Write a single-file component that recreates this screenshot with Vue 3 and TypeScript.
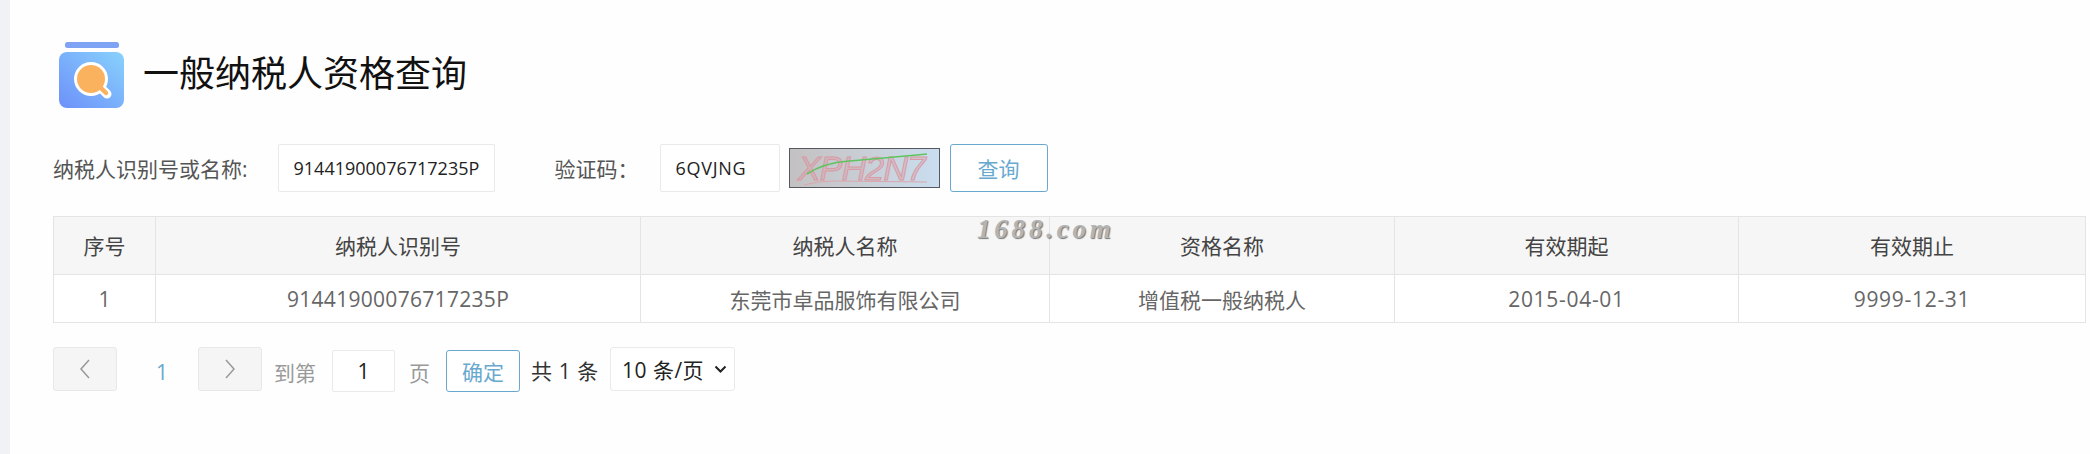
<template>
  <div class="page">
    <div class="strip"></div>
    <main class="main">
      <header class="title-row">
        <svg class="logo" width="66" height="66" viewBox="0 0 66 66">
          <defs>
            <linearGradient id="jar" x1="0" y1="1" x2="1" y2="0">
              <stop offset="0" stop-color="#6d90fa" />
              <stop offset="1" stop-color="#88d2fc" />
            </linearGradient>
          </defs>
          <rect x="6" y="0" width="54" height="6" rx="2.5" fill="#7ea3f5" />
          <rect x="0" y="10" width="65" height="56" rx="8" fill="url(#jar)" />
          <path d="M43 47 L48 52" stroke="#fff" stroke-width="9" stroke-linecap="round" />
          <circle cx="32" cy="37" r="17" fill="#fff" />
          <path d="M42 46 L47 51" stroke="#fbb25f" stroke-width="4.5" stroke-linecap="round" />
          <circle cx="32" cy="37" r="14" fill="#fbb25f" />
        </svg>
        <h1 class="title">一般纳税人资格查询</h1>
      </header>

      <form class="query" @submit.prevent>
        <label class="label">纳税人识别号或名称:</label>
        <input class="field field-id" value="91441900076717235P" />
        <label class="label label-code">验证码：</label>
        <input class="field field-code" value="6QVJNG" />
        <svg class="captcha" width="151" height="40" viewBox="0 0 151 40">
          <defs>
            <linearGradient id="cap" x1="0" y1="0" x2="1" y2="0">
              <stop offset="0" stop-color="#c3c0c1" />
              <stop offset="0.5" stop-color="#c9cfd6" />
              <stop offset="1" stop-color="#c9def0" />
            </linearGradient>
          </defs>
          <rect x="0.5" y="0.5" width="150" height="39" fill="url(#cap)" stroke="#55595f" />
          <text class="captcha-text" x="9" y="32" textLength="128">XPH2N7</text>
          <path d="M15 37 Q28 33 45 33 L138 34" fill="none" stroke="#dba7ad" stroke-width="1" />
          <path d="M18 26 Q34 15 60 13 T138 6" fill="none" stroke="#5fc45f" stroke-width="1.6" />
        </svg>
        <button class="btn btn-query" type="button">查询</button>
      </form>

      <div class="table-wrap">
        <table class="table">
          <colgroup>
            <col v-for="w in colWidths" :key="w.id" :style="{ width: w.px + 'px' }" />
          </colgroup>
          <thead>
            <tr>
              <th v-for="h in headers" :key="h"><span class="th-text">{{ h }}</span></th>
            </tr>
          </thead>
          <tbody>
            <tr>
              <td v-for="c in cells" :key="c.text" :class="c.cls">{{ c.text }}</td>
            </tr>
          </tbody>
        </table>
        <span class="watermark">1688.com</span>
      </div>

      <nav class="pager">
        <button class="page-btn" type="button" aria-label="prev">
          <svg width="12" height="20" viewBox="0 0 12 20"><path d="M10 1 L2 10 L10 19" /></svg>
        </button>
        <span class="page-num">1</span>
        <button class="page-btn" type="button" aria-label="next">
          <svg width="12" height="20" viewBox="0 0 12 20"><path d="M2 1 L10 10 L2 19" /></svg>
        </button>
        <span class="muted goto">到第</span>
        <input class="field page-input" value="1" />
        <span class="muted unit">页</span>
        <button class="btn btn-ok" type="button">确定</button>
        <span class="total">共 1 条</span>
        <div class="size">
          <span>10 条/页</span>
          <svg width="13" height="8" viewBox="0 0 13 8"><path d="M1.5 1.5 L6.5 6.5 L11.5 1.5" /></svg>
        </div>
      </nav>
    </main>
  </div>
</template>

<script setup lang="ts">
const headers = ['序号', '纳税人识别号', '纳税人名称', '资格名称', '有效期起', '有效期止']
const cells = [
  { text: '1', cls: '' },
  { text: '91441900076717235P', cls: 'num-id' },
  { text: '东莞市卓品服饰有限公司', cls: '' },
  { text: '增值税一般纳税人', cls: '' },
  { text: '2015-04-01', cls: 'num-date' },
  { text: '9999-12-31', cls: 'num-date' },
]
const colWidths = [102, 485, 409, 345, 344, 347].map((px, id) => ({ id, px }))
</script>

<style>
html,
body {
  margin: 0;
  background: #fefefe;
}
</style>

<style scoped>
.page {
  display: flex;
  width: 2090px;
  height: 454px;
  overflow: hidden;
  background: #fefefe;
  font-family: "Open Sans", "Noto Sans CJK SC", sans-serif;
  color: #555;
}

.strip {
  width: 10px;
  flex: none;
  background: #f0f2f5;
}

.main {
  flex: 1;
  padding: 42px 0 0 43px;
}

.title-row {
  display: flex;
  align-items: center;
  gap: 18px;
  margin-left: 6px;
  height: 66px;
}

.logo {
  flex: none;
}

.title {
  margin: 0 0 3px;
  font-size: 36px;
  font-weight: 400;
  color: #111;
  line-height: 60px;
}

.query {
  display: flex;
  align-items: center;
  height: 48px;
  margin-top: 36px;
}

.label {
  font-size: 21px;
  color: #555;
  white-space: nowrap;
}

.label-code {
  margin-left: 60px;
  width: 105px;
}

.field {
  box-sizing: border-box;
  height: 48px;
  border: 1px solid #eaeaea;
  border-radius: 2px;
  background: #fff;
  color: #222;
  font: inherit;
  font-size: 18px;
  outline: none;
}

.field-id {
  width: 217px;
  margin-left: 30px;
  padding: 0 0 0 15px;
}

.field-code {
  width: 120px;
  padding: 0 0 0 15px;
  letter-spacing: 0.7px;
}

.captcha {
  flex: none;
  margin-left: 9px;
}

.captcha-text {
  font-family: "Liberation Sans", sans-serif;
  font-size: 34px;
  font-style: italic;
  fill: rgba(222, 150, 160, 0.35);
  stroke: #d99aa5;
  stroke-width: 1;
}

.btn {
  box-sizing: border-box;
  height: 48px;
  border: 1px solid #69a9cf;
  border-radius: 3px;
  background: #fff;
  color: #69a9cf;
  font: inherit;
  font-size: 21px;
  padding: 0;
}

.btn-query {
  width: 98px;
  margin-left: 10px;
}

.table-wrap {
  position: relative;
  margin-top: 24px;
  width: 2032px;
}

.table {
  box-sizing: border-box;
  width: 2032px;
  table-layout: fixed;
  border-collapse: collapse;
  font-size: 21px;
}

.table th,
.table td {
  border: 1px solid #e4e4e4;
  padding: 0;
  text-align: center;
  font-weight: 400;
}

.table th {
  height: 57px;
  background: #f6f6f6;
  color: #444;
}

.th-text {
  position: relative;
  top: -1px;
}

.table td {
  height: 47px;
  background: #fff;
  color: #666;
}

.table td.num-id {
  letter-spacing: 0.3px;
}

.table td.num-date {
  letter-spacing: 0.7px;
}

.watermark {
  position: absolute;
  left: 924px;
  top: -2px;
  font-family: "Liberation Serif", serif;
  font-size: 27px;
  font-style: italic;
  font-weight: 700;
  letter-spacing: 3.8px;
  color: #b4b4b4;
  text-shadow: 1px 1px 1px #777;
}

.pager {
  display: flex;
  align-items: flex-start;
  height: 45px;
  margin-top: 24px;
  font-size: 21px;
}

.page-btn {
  display: flex;
  align-items: center;
  justify-content: center;
  box-sizing: border-box;
  width: 64px;
  height: 44px;
  padding: 0;
  border: 1px solid #e8e8e8;
  border-radius: 3px;
  background: #f5f5f5;
}

.page-btn path {
  fill: none;
  stroke: #999;
  stroke-width: 1.5;
}

.page-num {
  box-sizing: border-box;
  width: 81px;
  padding: 3px 0 0 9px;
  line-height: 44px;
  text-align: center;
  color: #69a9cf;
}

.muted {
  color: #999;
  line-height: 44px;
}

.goto {
  margin-left: 12px;
  padding-top: 4px;
}

.page-input {
  width: 63px;
  height: 42px;
  margin: 3px 0 0 16px;
  padding: 0;
  text-align: center;
  font-size: 21px;
  color: #222;
}

.unit {
  margin-left: 14px;
  padding-top: 4px;
}

.btn-ok {
  width: 74px;
  height: 42px;
  margin: 3px 0 0 16px;
}

.total {
  margin-left: 11px;
  padding-top: 2px;
  color: #333;
  line-height: 44px;
  letter-spacing: 0.6px;
}

.size {
  display: flex;
  align-items: center;
  justify-content: space-between;
  box-sizing: border-box;
  width: 125px;
  height: 44px;
  margin-left: 11px;
  padding: 0 7px 0 11px;
  border: 1px solid #eaeaea;
  border-radius: 3px;
  background: #fff;
  color: #222;
  white-space: nowrap;
  letter-spacing: 0.5px;
}

.size path {
  fill: none;
  stroke: #222;
  stroke-width: 2;
}
</style>
